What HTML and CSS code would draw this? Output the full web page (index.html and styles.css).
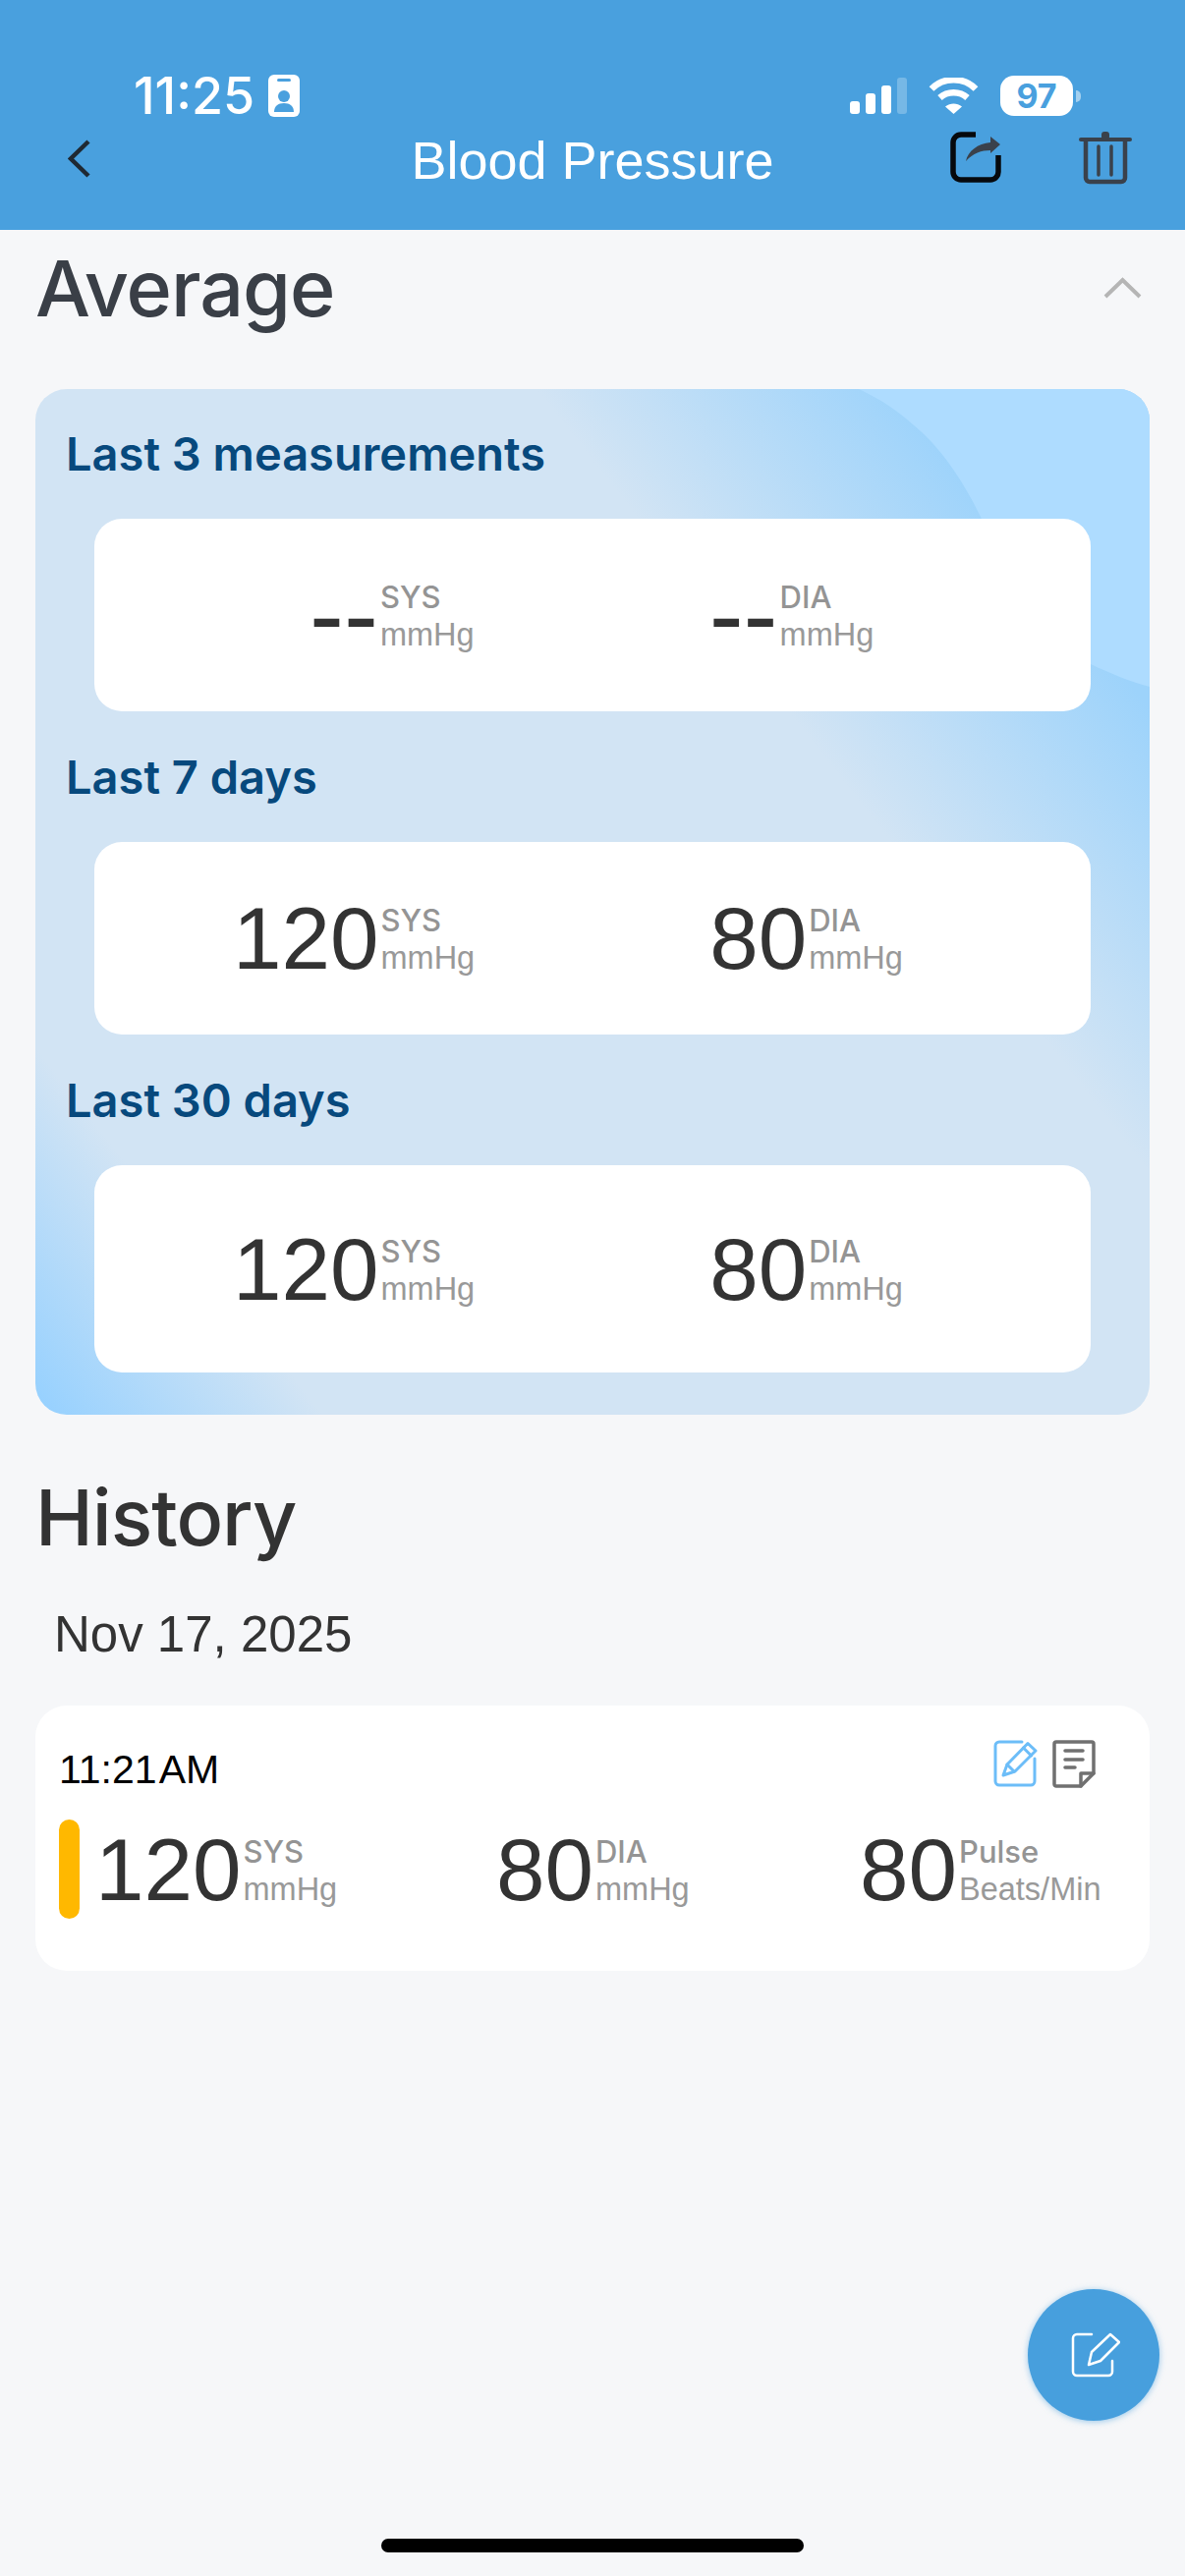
FILE: index.html
```html
<!DOCTYPE html>
<html lang="en">
<head>
  <meta charset="UTF-8" />
  <meta name="viewport" content="width=device-width, initial-scale=1.0"/>
  <title>Blood Pressure</title>
  <link rel="stylesheet" href="styles.css">
</head>
<body>
  <header class="top">
    <div class="status">
      <div class="status-left">
        <span class="clock">11:25</span>
        <svg class="badge" width="32" height="43" viewBox="0 0 32 43">
          <rect width="32" height="43" rx="6" fill="#fff"/>
          <rect x="9" y="4" width="14" height="3" rx="1.5" fill="#49a0de"/>
          <circle cx="16" cy="22" r="6" fill="#49a0de"/>
          <path d="M6 38c0-6 4-9 10-9s10 3 10 9z" fill="#49a0de"/>
        </svg>
      </div>
      <div class="status-right">
        <svg width="58" height="37" viewBox="0 0 58 37" fill="#fff">
          <rect y="24" width="10" height="13" rx="3"/>
          <rect x="16" y="16" width="10" height="21" rx="3"/>
          <rect x="32" y="8" width="10" height="29" rx="3"/>
          <rect x="48" width="10" height="37" rx="3" opacity=".25"/>
        </svg>
        <svg class="wifi" width="51" height="37" viewBox="0 0 51 37" fill="none" stroke="#fff" stroke-width="6.5">
          <path d="M3 11.5C15-1 36-1 48 11.5"/>
          <path d="M11.5 20.5C19 13.500 32 13.500 39.500 20.500"/>
          <path d="M17 29.500C22 25.500 29 25.500 34 29.500L25.500 37Z" fill="#fff" stroke="none"/>
        </svg>
        <div class="battery"><span class="battery-num">97</span></div>
        <span class="battery-nib"></span>
      </div>
    </div>
    <nav class="bar">
      <a class="back">
        <svg width="23" height="39" viewBox="0 0 23 39" fill="none" stroke="#1f2933" stroke-width="4.500">
          <path d="M21 2 3 19.500 21 37"/>
        </svg>
      </a>
      <h1 class="bar-title">Blood Pressure</h1>
      <div class="bar-actions">
        <svg width="52" height="52" viewBox="0 0 52 52" fill="none">
          <path d="M26 3H11a8 8 0 0 0-8 8v30a8 8 0 0 0 8 8h30a8 8 0 0 0 8-8V24" stroke="#06090d" stroke-width="5.500"/>
          <path d="M16 30C18 20 28 12 41 11V5L51 13 41 22V19C32 19 23 22 16 30Z" fill="#3a414b"/>
        </svg>
        <svg width="54" height="54" viewBox="0 0 54 54" fill="none" stroke="#3a414b">
          <path d="M2 8H52" stroke-width="4" stroke-linecap="round"/>
          <rect x="23" y="0" width="8" height="8" rx="3" fill="#3a414b" stroke="none"/>
          <path d="M7 9V47a4 4 0 0 0 4 4H43a4 4 0 0 0 4-4V9" stroke-width="4.500"/>
          <path d="M20 15V44M33 15V44" stroke-width="3.500" stroke-linecap="round"/>
        </svg>
      </div>
    </nav>
  </header>

  <main class="page">
    <div class="section-head">
      <h2 class="section-title section-title-dark">Average</h2>
      <svg width="39" height="22" viewBox="0 0 39 22" fill="none" stroke="#b5b5b5" stroke-width="4">
        <path d="M2 20 19.500 3 37 20"/>
      </svg>
    </div>

    <section class="avg-card">
      <svg class="avg-blob" viewBox="0 0 1134 1044" preserveAspectRatio="none">
        <path d="M838 0C860 10 880 24 893 36 910 50 935 75 962 130 985 180 1010 250 1074 280 1095 290 1115 298 1134 303V0Z" fill="#aedcff"/>
      </svg>
      <h3 class="avg-label">Last 3 measurements</h3>
      <div class="avg-row avg-row-empty">
        <div class="reading"><span class="value">--</span><span class="unit"><b>SYS</b><i>mmHg</i></span></div>
        <div class="reading"><span class="value">--</span><span class="unit"><b>DIA</b><i>mmHg</i></span></div>
      </div>
      <h3 class="avg-label">Last 7 days</h3>
      <div class="avg-row">
        <div class="reading"><span class="value">120</span><span class="unit"><b>SYS</b><i>mmHg</i></span></div>
        <div class="reading"><span class="value">80</span><span class="unit"><b>DIA</b><i>mmHg</i></span></div>
      </div>
      <h3 class="avg-label">Last 30 days</h3>
      <div class="avg-row avg-row-tall">
        <div class="reading"><span class="value">120</span><span class="unit"><b>SYS</b><i>mmHg</i></span></div>
        <div class="reading"><span class="value">80</span><span class="unit"><b>DIA</b><i>mmHg</i></span></div>
      </div>
    </section>

    <h2 class="section-title history-title">History</h2>
    <p class="date">Nov 17, 2025</p>

    <article class="record">
      <div class="record-top">
        <span class="record-time">11:21 AM</span>
        <div class="record-icons">
          <svg width="45" height="48" viewBox="0 0 45 48" fill="none" stroke="#6cbdf8" stroke-width="3" stroke-linecap="round" stroke-linejoin="round">
            <path d="M29 2H6A4 4 0 0 0 2 6V42A4 4 0 0 0 6 46H38A4 4 0 0 0 42 42V19"/>
            <path d="M10 36 14 25 35 3.500 43 11 22 32Z"/>
            <path d="M14 25 21 32M30.500 8 38.500 16"/>
          </svg>
          <svg width="44" height="49" viewBox="0 0 44 49" fill="none" stroke="#707070" stroke-width="3.500" stroke-linecap="round" stroke-linejoin="round">
            <path d="M4 2H40A2 2 0 0 1 42 4V34L29 47H4A2 2 0 0 1 2 45V4A2 2 0 0 1 4 2Z"/>
            <path d="M42 34H29V47"/>
            <path d="M13 11H31M13 20H31M13 28H23"/>
          </svg>
        </div>
      </div>
      <div class="record-values">
        <div class="reading">
          <span class="level"></span>
          <span class="value">120</span><span class="unit"><b>SYS</b><i>mmHg</i></span>
        </div>
        <div class="reading"><span class="value">80</span><span class="unit"><b>DIA</b><i>mmHg</i></span></div>
        <div class="reading"><span class="value">80</span><span class="unit"><b>Pulse</b><i>Beats/Min</i></span></div>
      </div>
    </article>
  </main>

  <button class="fab">
    <svg width="50" height="46" viewBox="0 0 50 46" fill="none" stroke="#fff" stroke-width="2.500" stroke-linecap="round" stroke-linejoin="round">
      <path d="M21 2H6A4 4 0 0 0 2 6V40A4 4 0 0 0 6 44H38A4 4 0 0 0 42 40V29"/>
      <path d="M18 33 21 20 40 2 49 10 30 29Z"/>
    </svg>
  </button>
  <div class="home-bar"></div>
</body>
</html>
```

FILE: styles.css
```css
* {
  margin: 0;
  padding: 0;
  box-sizing: border-box;
}
body {
  width: 1206px;
  height: 2622px;
  position: relative;
  overflow: hidden;
  background: #f6f7f9;
  color: #333;
  font-family: "Liberation Sans", Arial, sans-serif;
}
.top {
  background-color: #49a0de;
  height: 234px;
  padding-top: 76px;
}
.status {
  display: flex;
  justify-content: space-between;
  align-items: center;
  height: 43px;
  padding: 0 106px 0 136px;
}
.status-left {
  display: flex;
  align-items: center;
  gap: 14px;
}
.clock {
  color: white;
  font-family: Inter, sans-serif;
  font-size: 52px;
  font-weight: 500;
  line-height: 43px;
}
.status-right {
  display: flex;
  align-items: center;
}
.wifi {
  margin-left: 22px;
}
.battery {
  margin-left: 22px;
  width: 74px;
  height: 41px;
  background: white;
  border-radius: 14px;
  display: flex;
  align-items: center;
  justify-content: center;
}
.battery-num {
  color: #49a0de;
  font-family: Inter, sans-serif;
  font-size: 34px;
  font-weight: 700;
}
.battery-nib {
  margin-left: 3px;
  width: 5px;
  height: 12px;
  border-radius: 0 6px 6px 0;
  background: rgba(255, 255, 255, 0.5);
}
.bar {
  display: grid;
  grid-template-columns: 1fr auto 1fr;
  align-items: center;
  height: 54px;
  margin-top: 13px;
  padding: 0 54px;
}
.back {
  display: flex;
  margin-left: 15px;
}
.bar-title {
  color: white;
  font-size: 54px;
  font-weight: 400;
  line-height: 54px;
  margin-top: 4px;
}
.bar-actions {
  display: flex;
  justify-content: flex-end;
  align-items: flex-start;
  gap: 79px;
}
.page {
  padding: 0 36px;
}
.section-head {
  display: flex;
  justify-content: space-between;
  align-items: center;
  height: 118px;
  margin-bottom: 44px;
  padding-right: 8px;
}
.section-title {
  font-family: Inter, sans-serif;
  font-size: 79px;
  font-weight: 500;
  letter-spacing: -1px;
  line-height: 100px;
}
.section-title-dark {
  color: #3a3f47;
}
.avg-card {
  position: relative;
  overflow: hidden;
  height: 1044px;
  padding: 33px 60px 0;
  border-radius: 32px;
  background: linear-gradient(52deg, #94d0ff 0%, #d2e4f4 15%, #d2e4f4 68%, #9dd3fb 87%, #9dd3fb 100%);
}
.avg-blob {
  position: absolute;
  inset: 0;
  width: 100%;
  height: 100%;
}
.avg-label {
  position: relative;
  margin-left: -29px;
  color: #07497d;
  font-family: Inter, sans-serif;
  font-size: 47px;
  font-weight: 600;
  line-height: 66px;
}
.avg-row {
  position: relative;
  display: flex;
  align-items: center;
  gap: 239px;
  height: 196px;
  margin: 33px 0 34px;
  padding-left: 141px;
  background: white;
  border-radius: 28px;
}
.avg-row-empty {
  padding-left: 219px;
}
.avg-row-empty .value {
  font-size: 105px;
}
.avg-row-tall {
  height: 211px;
}
.reading {
  display: flex;
  align-items: center;
}
.value {
  font-size: 89px;
  line-height: 100px;
  color: #333;
}
.unit {
  display: flex;
  flex-direction: column;
  margin: 2px 0 0 2px;
  font-size: 32.5px;
  line-height: 39px;
  color: #999;
}
.unit b {
  font-family: Inter, sans-serif;
  font-size: 31px;
  font-weight: 500;
  color: #949494;
}
.unit i {
  font-style: normal;
}
.history-title {
  margin-top: 54px;
}
.date {
  margin: 40px 0 42px 19px;
  font-size: 51px;
  line-height: 60px;
}
.record {
  height: 270px;
  padding: 35px 55px 0 24px;
  background: white;
  border-radius: 32px;
}
.record-top {
  display: flex;
  justify-content: space-between;
  align-items: flex-start;
  height: 56px;
}
.record-time {
  color: black;
  font-size: 41px;
  line-height: 44px;
  margin-top: 8px;
  word-spacing: -7px;
}
.record-icons {
  display: flex;
  gap: 15px;
}
.record-values {
  display: grid;
  grid-template-columns: 445px 370px auto;
  margin-top: 25px;
  margin-right: -6px;
}
.level {
  width: 21px;
  height: 101px;
  margin-right: 16px;
  border-radius: 11px;
  background: #ffb800;
}
.fab {
  position: absolute;
  left: 1046px;
  top: 2330px;
  width: 134px;
  height: 134px;
  border: none;
  border-radius: 50%;
  background: #479fdd;
  box-shadow: 0 1px 6px rgba(71, 159, 221, 0.55);
  display: flex;
  align-items: center;
  justify-content: center;
  padding-left: 4px;
}
.home-bar {
  position: absolute;
  left: 388px;
  top: 2584px;
  width: 430px;
  height: 14px;
  border-radius: 7px;
  background: black;
}
```
